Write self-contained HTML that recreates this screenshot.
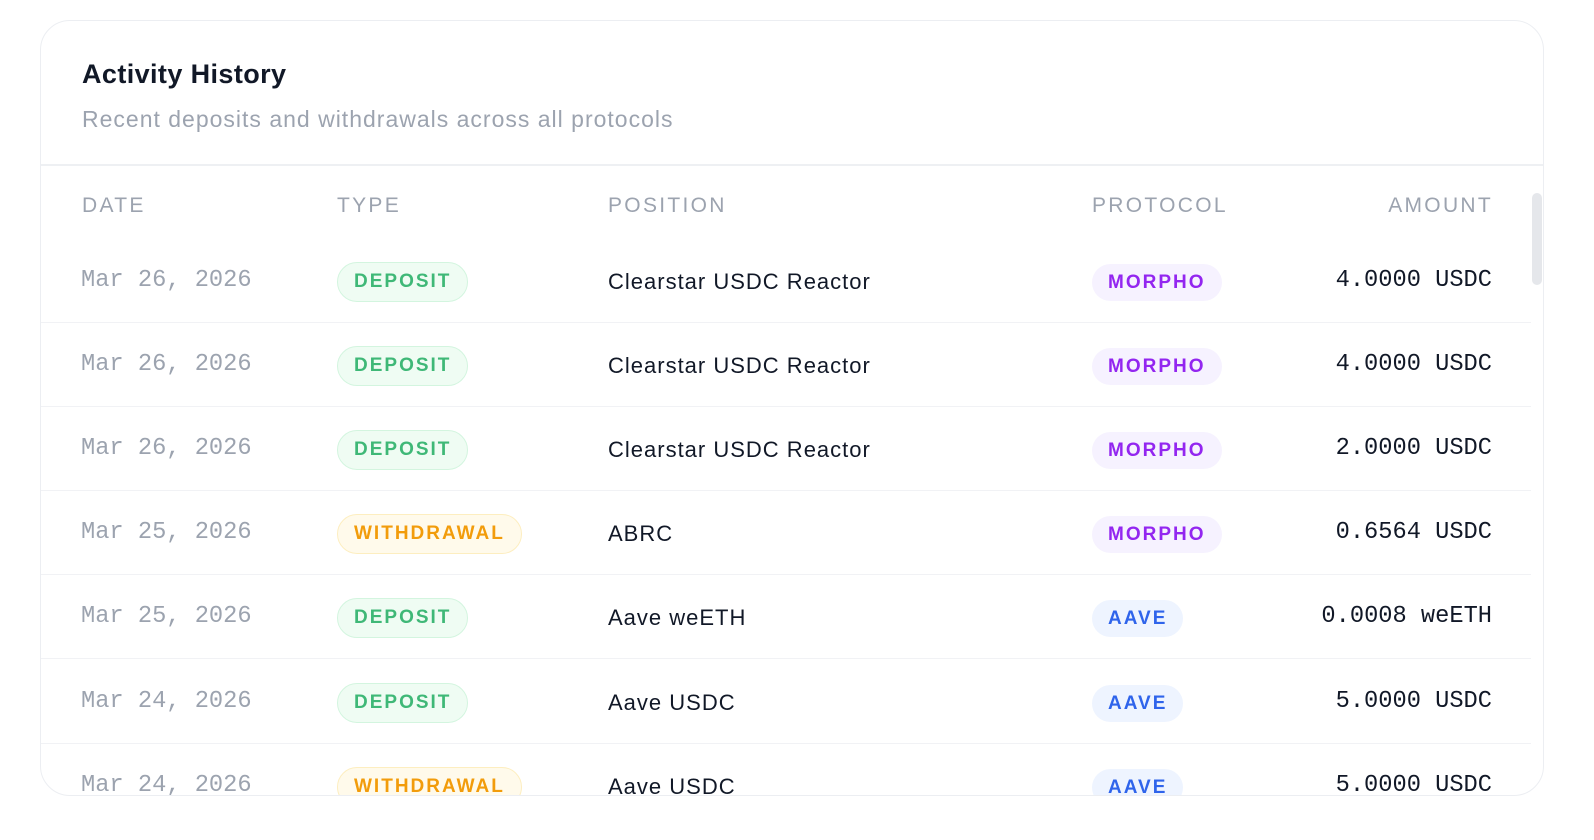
<!DOCTYPE html>
<html><head><style>
*{margin:0;padding:0;box-sizing:border-box}
body{width:1594px;height:840px;background:#fff;font-family:"Liberation Sans",sans-serif;position:relative;overflow:hidden}
.card{position:absolute;left:40px;top:20px;width:1504px;height:776px;border:1.5px solid #eceef2;border-radius:30px;overflow:hidden;background:#fff}
.title{position:absolute;left:41px;top:38px;font-size:27px;font-weight:bold;color:#111827;letter-spacing:0.4px}
.sub{position:absolute;left:41px;top:85px;font-size:23px;color:#9ca3af;letter-spacing:1px}
.hdiv{position:absolute;left:0;top:143px;width:100%;height:1.5px;background:#eef0f3}
.th{position:absolute;top:173px;font-size:21px;color:#9ca3af;letter-spacing:2.3px}
.row{position:absolute;left:0;width:1490px;height:84px;border-bottom:1.5px solid #f1f2f5}
.d{position:absolute;left:40px;font-family:"Liberation Mono",monospace;font-size:23.7px;color:#9ca3af;top:28px}
.b{position:absolute;left:296px;top:23px;height:40px;border-radius:20px;font-size:19px;font-weight:bold;letter-spacing:2px;line-height:37px;padding:0 16px}
.dep{background:#effcf3;border:1.5px solid #d3f5df;color:#3fb877}
.wd{background:#fffaeb;border:1.5px solid #fdeec0;color:#f29c0b}
.p{position:absolute;left:567px;top:30px;font-size:22px;color:#111827;letter-spacing:1px}
.pr{position:absolute;left:1051px;top:25px;height:37px;border-radius:19px;font-size:19px;font-weight:bold;letter-spacing:2px;line-height:37px;padding:0 16px}
.mo{background:#f6f2ff;color:#9326f0}
.aa{background:#eef4ff;color:#2f64eb}
.a{position:absolute;right:39px;top:28px;font-family:"Liberation Mono",monospace;font-size:23.7px;color:#111827}
.sb{position:absolute;left:1491px;top:172px;width:10px;height:92px;border-radius:5px;background:#e5e7eb}
</style></head><body>
<div class="card">
<div class="title">Activity History</div>
<div class="sub">Recent deposits and withdrawals across all protocols</div>
<div class="hdiv"></div>
<div class="th" style="left:41px">DATE</div>
<div class="th" style="left:296px">TYPE</div>
<div class="th" style="left:567px">POSITION</div>
<div class="th" style="left:1051px">PROTOCOL</div>
<div class="th" style="right:50px">AMOUNT</div>
<div class="sb"></div>

<div class="row" style="top:218px"><div class="d">Mar 26, 2026</div><div class="b dep">DEPOSIT</div><div class="p">Clearstar USDC Reactor</div><div class="pr mo">MORPHO</div><div class="a">4.0000 USDC</div></div>
<div class="row" style="top:302px"><div class="d">Mar 26, 2026</div><div class="b dep">DEPOSIT</div><div class="p">Clearstar USDC Reactor</div><div class="pr mo">MORPHO</div><div class="a">4.0000 USDC</div></div>
<div class="row" style="top:386px"><div class="d">Mar 26, 2026</div><div class="b dep">DEPOSIT</div><div class="p">Clearstar USDC Reactor</div><div class="pr mo">MORPHO</div><div class="a">2.0000 USDC</div></div>
<div class="row" style="top:470px"><div class="d">Mar 25, 2026</div><div class="b wd">WITHDRAWAL</div><div class="p">ABRC</div><div class="pr mo">MORPHO</div><div class="a">0.6564 USDC</div></div>
<div class="row" style="top:554px"><div class="d">Mar 25, 2026</div><div class="b dep">DEPOSIT</div><div class="p">Aave weETH</div><div class="pr aa">AAVE</div><div class="a">0.0008 weETH</div></div>
<div class="row" style="top:639px"><div class="d">Mar 24, 2026</div><div class="b dep">DEPOSIT</div><div class="p">Aave USDC</div><div class="pr aa">AAVE</div><div class="a">5.0000 USDC</div></div>
<div class="row" style="top:723px"><div class="d">Mar 24, 2026</div><div class="b wd">WITHDRAWAL</div><div class="p">Aave USDC</div><div class="pr aa">AAVE</div><div class="a">5.0000 USDC</div></div>
</div>
</body></html>
